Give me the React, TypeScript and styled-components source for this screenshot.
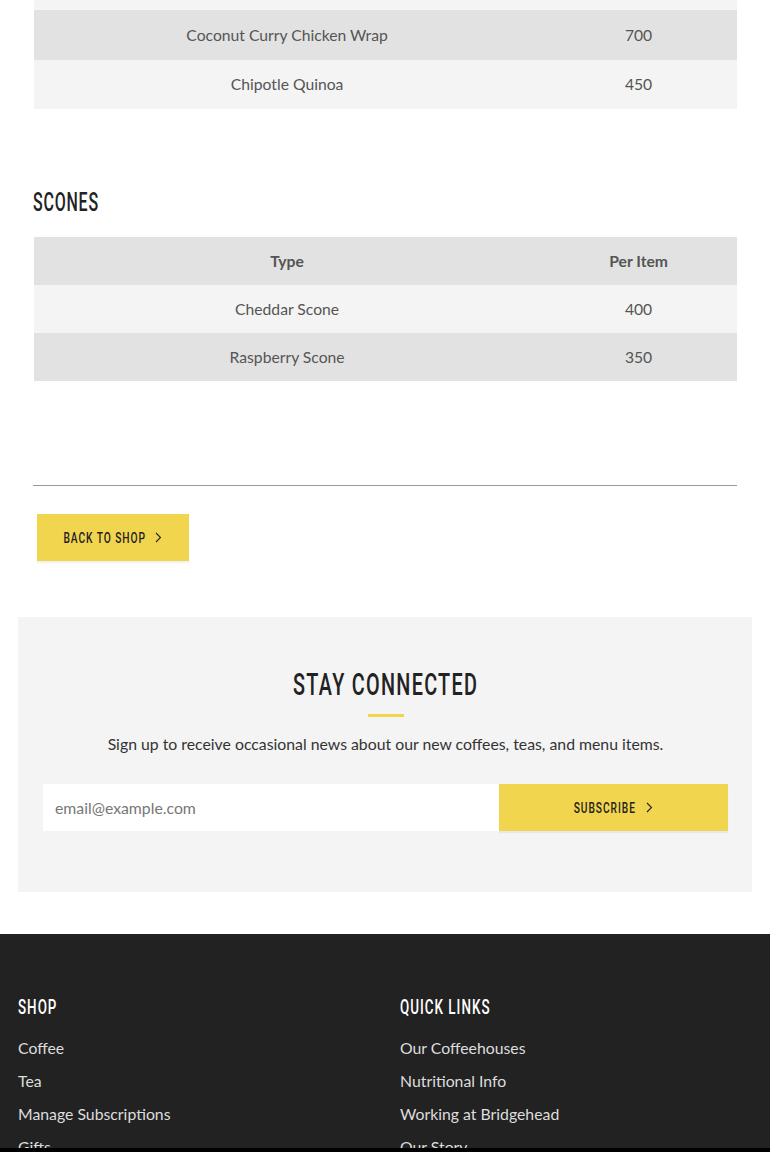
import styled, { createGlobalStyle } from 'styled-components';

const GlobalStyle = createGlobalStyle`
  html, body {
    margin: 0;
    padding: 0;
    background: #fff;
  }
  body {
    font-family: 'Lato', 'Open Sans', sans-serif;
    color: #555;
    overflow: hidden;
  }
`;

const headingFont = `'Roboto', 'DejaVu Sans', sans-serif`;

const S = {
  Page: styled.div`
    width: 770px;
  `,
  Content: styled.main`
    padding: 0 33px;
  `,
  TableWrap: styled.div`
    padding: 0 0 0 1px;
    overflow: hidden;
  `,
  Table: styled.table<{ $offset?: number }>`
    width: 100%;
    border-collapse: collapse;
    margin-top: ${({ $offset }) => ($offset ? `-${$offset}px` : '0')};
    font-size: 15.7px;
    color: #555;
  `,
  Row: styled.tr<{ $dark?: boolean; $h?: number }>`
    background: ${({ $dark }) => ($dark ? '#e2e2e2' : '#f4f4f4')};
    height: ${({ $h }) => $h || 48}px;
  `,
  Cell: styled.td<{ $narrow?: boolean }>`
    padding: 0;
    text-align: center;
    width: ${({ $narrow }) => ($narrow ? '28%' : '72%')};
  `,
  HeadCell: styled.th<{ $narrow?: boolean }>`
    padding: 0;
    text-align: center;
    font-weight: 700;
    color: #555;
    width: ${({ $narrow }) => ($narrow ? '28%' : '72%')};
  `,
  // Oswald-like condensed caps: Roboto squeezed horizontally
  Condensed: styled.span<{ $scale?: number; $origin?: string; $pull?: number }>`
    display: inline-block;
    transform: scaleX(${({ $scale }) => $scale || 0.68});
    transform-origin: ${({ $origin }) => $origin || 'left'};
    margin: 0 ${({ $pull }) => ($pull ? `-${$pull}px` : '0')};
    white-space: nowrap;
  `,
  SectionTitle: styled.h2`
    font-family: ${headingFont};
    font-weight: 500;
    font-size: 25px;
    letter-spacing: 1.2px;
    text-transform: uppercase;
    color: #222;
    margin: 80px 0 20px;
    line-height: 28px;
  `,
  Divider: styled.hr`
    border: 0;
    border-top: 1px solid #9a9a9a;
    margin: 104px 0 0;
  `,
  ButtonRow: styled.div`
    display: flex;
    padding: 28px 0 0 4px;
  `,
  YellowButton: styled.button<{ $wide?: boolean }>`
    display: inline-flex;
    align-items: center;
    justify-content: center;
    gap: 10px;
    height: 47px;
    width: ${({ $wide }) => ($wide ? '229px' : '152px')};
    padding: 0;
    border: 0;
    background: #f2d54e;
    color: #222;
    font-family: ${headingFont};
    font-weight: 500;
    font-size: 15px;
    letter-spacing: 1.4px;
    text-transform: uppercase;
    box-shadow: 0 2px 1px rgba(0, 0, 0, 0.05);
    cursor: pointer;
    flex-shrink: 0;
  `,
  Newsletter: styled.section`
    margin: 56px 18px 42px;
    background: #f4f4f4;
    padding: 50px 24px 61px 25px;
    display: flex;
    flex-direction: column;
    align-items: center;
  `,
  NewsTitle: styled.h2`
    font-family: ${headingFont};
    font-weight: 500;
    font-size: 31px;
    letter-spacing: 2px;
    color: #222;
    margin: 0;
    line-height: 36px;
    text-transform: uppercase;
  `,
  Accent: styled.div`
    width: 36px;
    height: 3px;
    background: #f2d54e;
    margin: 11px 0 0;
  `,
  NewsText: styled.p`
    font-size: 15.8px;
    color: #333;
    margin: 17px 0 0;
    line-height: 20px;
  `,
  Form: styled.form`
    display: flex;
    width: 100%;
    margin-top: 30px;
  `,
  EmailInput: styled.input`
    flex: 1;
    height: 47px;
    box-sizing: border-box;
    border: 0;
    background: #fff;
    padding: 0 12px;
    font-family: 'Lato', sans-serif;
    font-size: 15.8px;
    color: #555;
    outline: none;
    &::placeholder {
      color: #777;
    }
  `,
  Footer: styled.footer`
    background: #222;
    padding: 61px 18px 0;
    display: grid;
    grid-template-columns: 382px 1fr;
    height: 260px;
  `,
  FooterCol: styled.div`
    display: flex;
    flex-direction: column;
  `,
  FooterTitle: styled.h3`
    font-family: ${headingFont};
    font-weight: 500;
    font-size: 20px;
    letter-spacing: 1.5px;
    color: #fff;
    margin: 0 0 12px;
    line-height: 24px;
    text-transform: uppercase;
  `,
  FooterLink: styled.a`
    font-size: 15.8px;
    color: #ddd;
    text-decoration: none;
    line-height: 33px;
  `,
  BottomBar: styled.div`
    position: fixed;
    left: 0;
    right: 0;
    bottom: 0;
    height: 4px;
    background: #000;
  `,
};

const Chevron = () => (
  <svg width="7" height="11" viewBox="0 0 7 11" fill="none">
    <path d="M1 1l4.5 4.5L1 10" stroke="#222" strokeWidth="1.1" />
  </svg>
);

const wraps = [
  { name: 'Roasted Vegetable Wrap', cal: '550' },
  { name: 'Coconut Curry Chicken Wrap', cal: '700' },
  { name: 'Chipotle Quinoa', cal: '450' },
];

const scones = [
  { name: 'Cheddar Scone', cal: '400' },
  { name: 'Raspberry Scone', cal: '350' },
];

const shopLinks = ['Coffee', 'Tea', 'Manage Subscriptions', 'Gifts'];
const quickLinks = ['Our Coffeehouses', 'Nutritional Info', 'Working at Bridgehead', 'Our Story'];

const App = () => {
  return (
    <S.Page>
      <GlobalStyle />
      <S.Content>
        <S.TableWrap>
          <S.Table $offset={39.5}>
            <tbody>
              {wraps.map((w, i) => (
                <S.Row key={w.name} $dark={i % 2 === 1} $h={49.5}>
                  <S.Cell>{w.name}</S.Cell>
                  <S.Cell $narrow>{w.cal}</S.Cell>
                </S.Row>
              ))}
            </tbody>
          </S.Table>
        </S.TableWrap>

        <S.SectionTitle>
          <S.Condensed $scale={0.64}>Scones</S.Condensed>
        </S.SectionTitle>
        <S.TableWrap>
          <S.Table>
            <thead>
              <S.Row $dark>
                <S.HeadCell>Type</S.HeadCell>
                <S.HeadCell $narrow>Per Item</S.HeadCell>
              </S.Row>
            </thead>
            <tbody>
              {scones.map((s, i) => (
                <S.Row key={s.name} $dark={i % 2 === 1}>
                  <S.Cell>{s.name}</S.Cell>
                  <S.Cell $narrow>{s.cal}</S.Cell>
                </S.Row>
              ))}
            </tbody>
          </S.Table>
        </S.TableWrap>

        <S.Divider />
        <S.ButtonRow>
          <S.YellowButton>
            <S.Condensed $scale={0.68} $origin="center" $pull={20}>
              Back to shop
            </S.Condensed>
            <Chevron />
          </S.YellowButton>
        </S.ButtonRow>
      </S.Content>

      <S.Newsletter>
        <S.NewsTitle>
          <S.Condensed $scale={0.64} $origin="center">
            Stay Connected
          </S.Condensed>
        </S.NewsTitle>
        <S.Accent />
        <S.NewsText>
          Sign up to receive occasional news about our new coffees, teas, and menu items.
        </S.NewsText>
        <S.Form onSubmit={(e) => e.preventDefault()}>
          <S.EmailInput type="email" placeholder="email@example.com" />
          <S.YellowButton $wide type="submit">
            <S.Condensed $scale={0.68} $origin="center" $pull={15}>
              Subscribe
            </S.Condensed>
            <Chevron />
          </S.YellowButton>
        </S.Form>
      </S.Newsletter>

      <S.Footer>
        <S.FooterCol>
          <S.FooterTitle>
            <S.Condensed $scale={0.67}>Shop</S.Condensed>
          </S.FooterTitle>
          {shopLinks.map((l) => (
            <S.FooterLink key={l} href="#">
              {l}
            </S.FooterLink>
          ))}
        </S.FooterCol>
        <S.FooterCol>
          <S.FooterTitle>
            <S.Condensed $scale={0.67}>Quick Links</S.Condensed>
          </S.FooterTitle>
          {quickLinks.map((l) => (
            <S.FooterLink key={l} href="#">
              {l}
            </S.FooterLink>
          ))}
        </S.FooterCol>
      </S.Footer>
      <S.BottomBar />
    </S.Page>
  );
};

export default App;
